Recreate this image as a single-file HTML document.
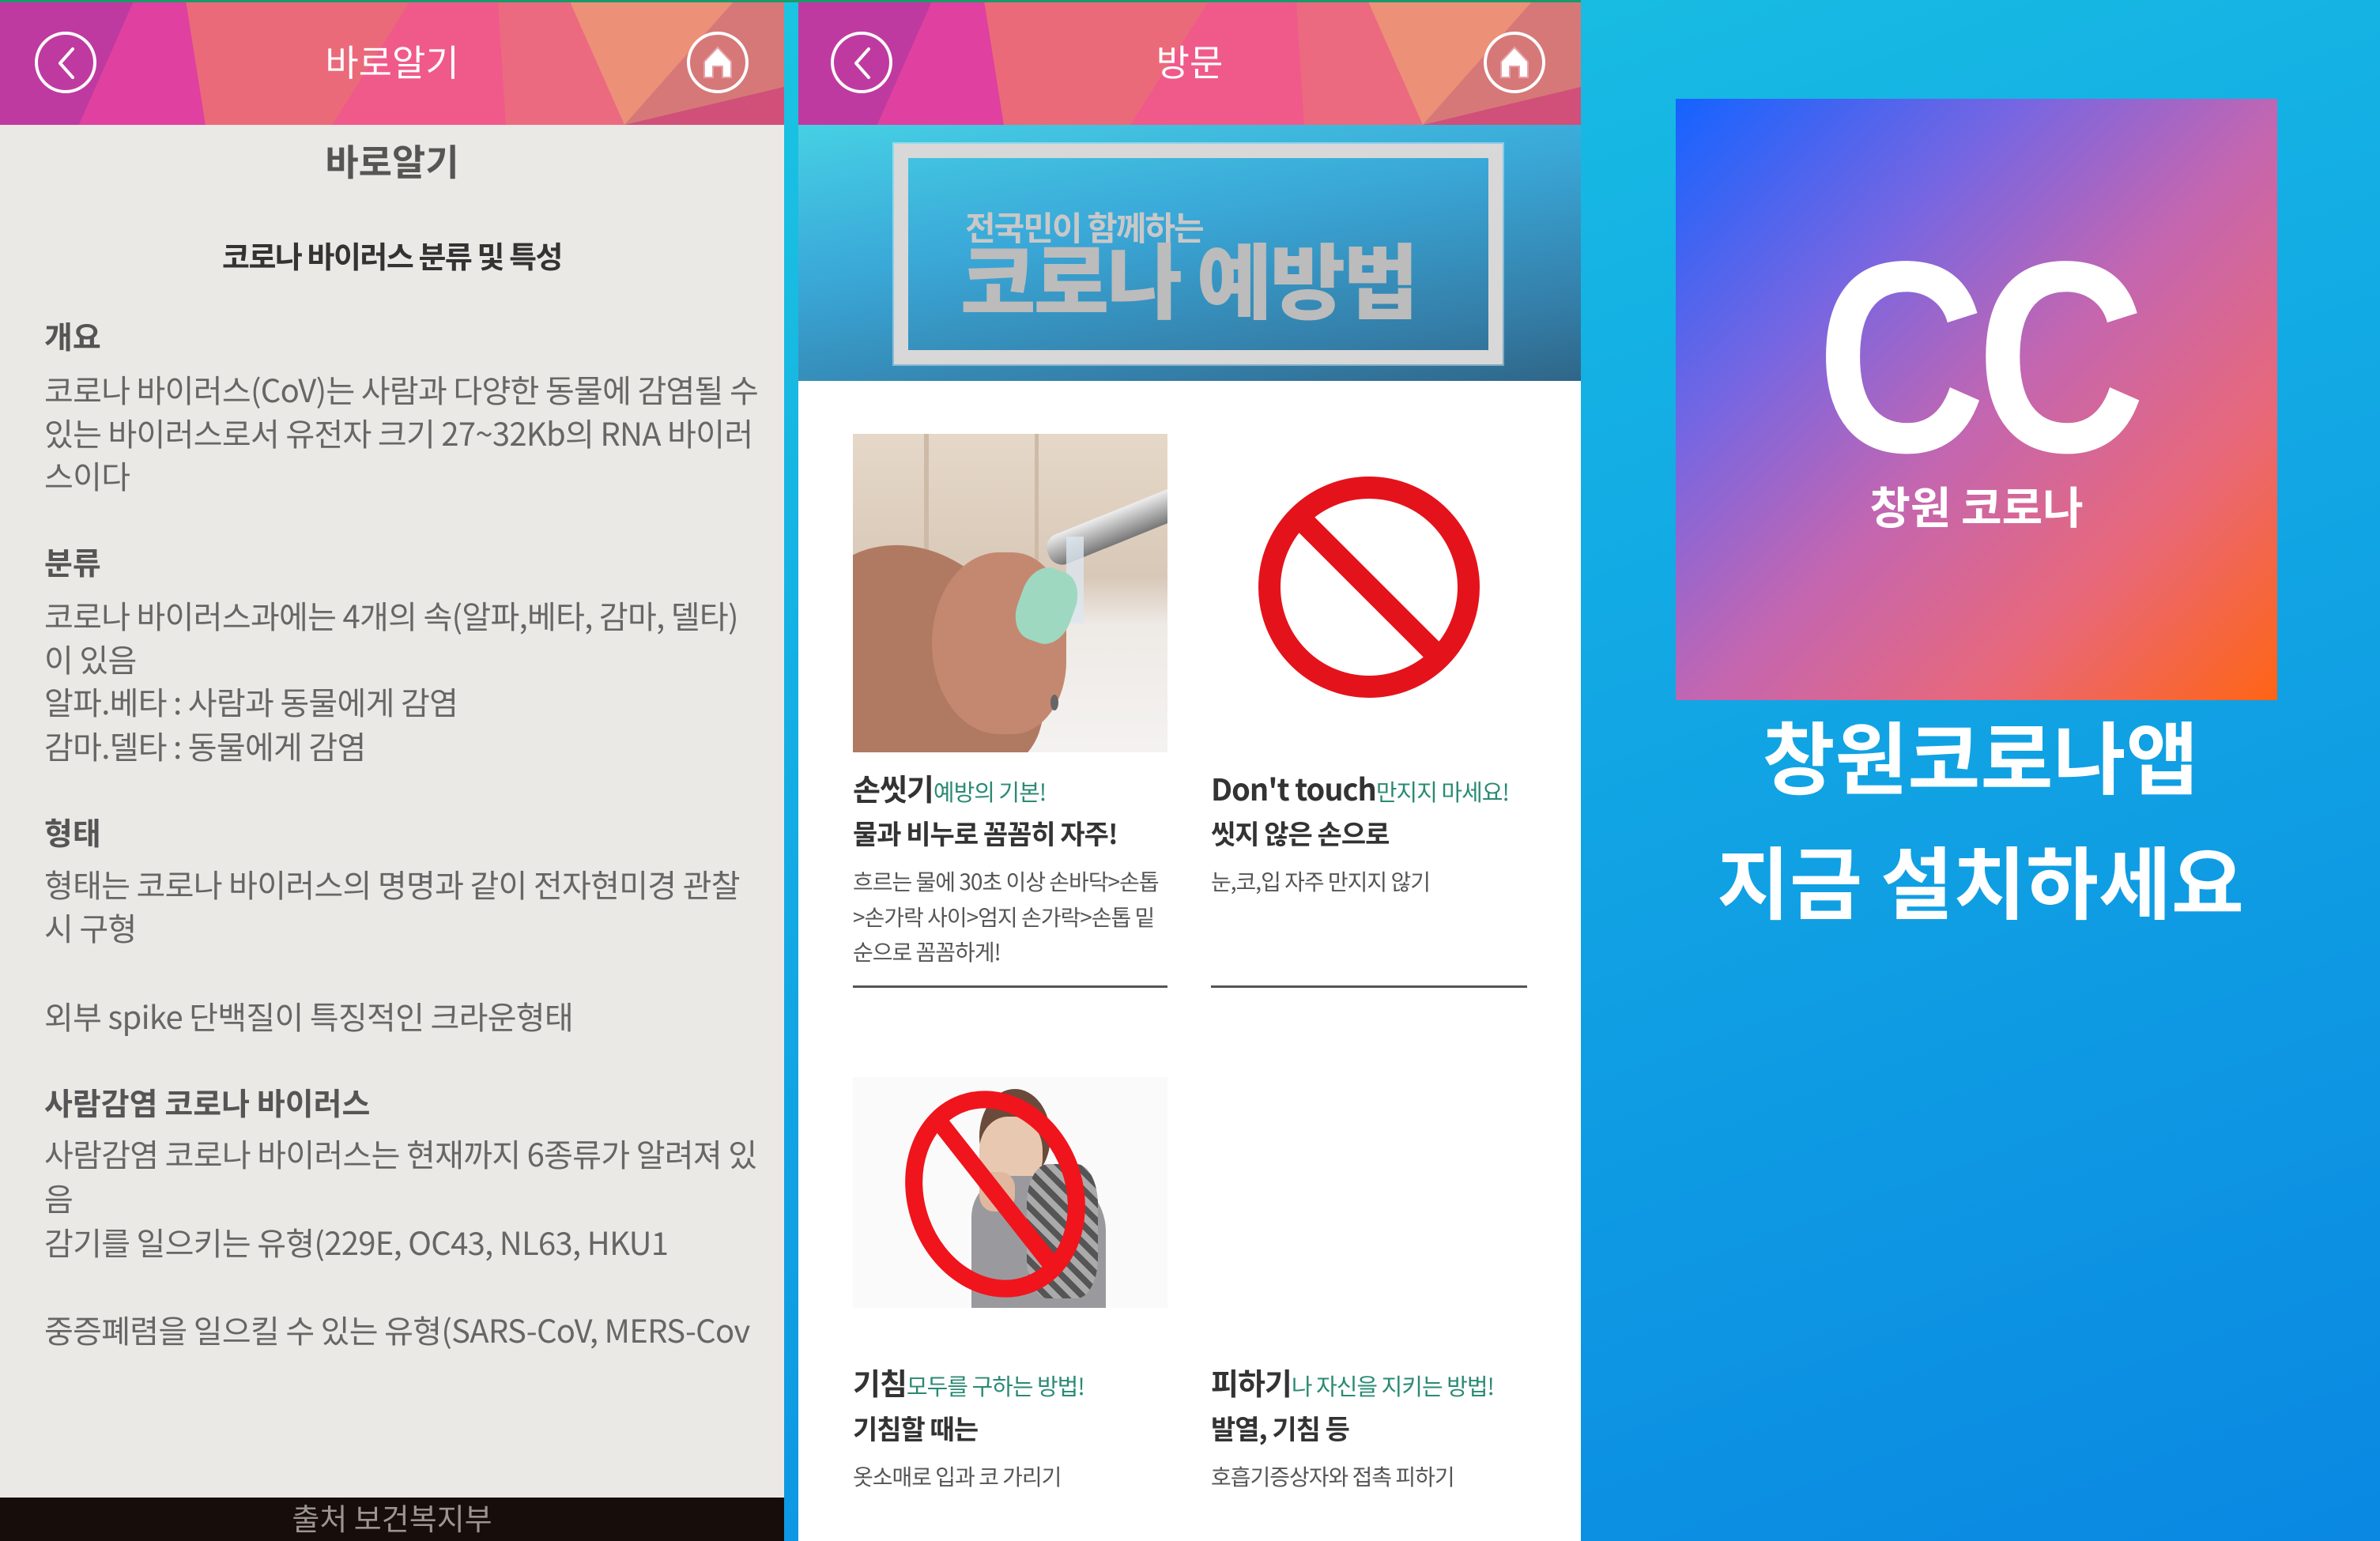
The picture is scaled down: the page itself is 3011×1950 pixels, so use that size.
<!DOCTYPE html>
<html><head><meta charset="utf-8">
<style>
*{margin:0;padding:0;box-sizing:border-box}
body{width:3011px;height:1950px;overflow:hidden;position:relative;background:linear-gradient(160deg,#1ecde0 0%,#14b0e4 40%,#0a88e2 100%);font-family:"Liberation Sans","Noto Sans CJK KR",sans-serif}
.t{position:absolute;white-space:nowrap;line-height:1}
.k{font-family:"Noto Sans CJK KR","Liberation Sans",sans-serif}
.p{position:absolute;overflow:hidden}
.lt{left:56px;font-size:40px;color:#666;letter-spacing:-0.7px}
.lh{left:56px;font-size:39px;color:#555;font-weight:bold}
.c1{left:69px}.c2{left:522px}
.h1{font-size:38px;font-weight:bold;color:#333;letter-spacing:-1px}
.h1 span{font-size:29px;color:#2a8a72;font-weight:normal}
.h2{font-size:34px;font-weight:bold;color:#333;letter-spacing:-1px}
.b{font-size:28px;color:#555;letter-spacing:-1px}
</style></head><body>
<div style="position:absolute;left:0;top:0;width:2000px;height:3px;background:#1a9a6a;z-index:5"></div>

<!-- LEFT PANEL -->
<div class="p" style="left:0;top:0;width:992px;height:1950px;background:#ebe9e5">
<svg width="992" height="158" style="position:absolute;left:0;top:0">
<rect width="992" height="158" fill="#ea6a80"/>
<polygon points="0,0 170,0 100,158 0,158" fill="#bf3aa0"/>
<polygon points="170,0 235,0 260,158 100,158" fill="#e040a0"/>
<polygon points="235,0 520,0 420,158 260,158" fill="#ea6a7a"/>
<polygon points="520,0 630,0 640,158 420,158" fill="#f05a8a"/>
<polygon points="630,0 720,0 790,158 640,158" fill="#eb6a80"/>
<polygon points="720,0 930,0 790,158" fill="#ec9078"/>
<polygon points="930,0 992,0 992,158 790,158" fill="#d67878"/>
<polygon points="790,158 992,110 992,158" fill="#d0507a"/>
<circle cx="83" cy="79" r="37" fill="none" stroke="#fff" stroke-width="4"/>
<path d="M92 62 L76 80 L92 98" fill="none" stroke="#fff" stroke-width="4" stroke-linecap="round" stroke-linejoin="round"/>
<circle cx="908" cy="79" r="37" fill="none" stroke="#fff" stroke-width="4"/>
<path d="M891 98 L891 78 L908 60 L925 78 L925 98 L914 98 L914 84 L902 84 L902 98 Z" fill="#fff" stroke="#e8a0a8" stroke-width="2"/>
</svg>
<div class="t k" style="left:0;width:992px;text-align:center;top:54px;font-size:46px;color:#fff">바로알기</div>
<div class="t k" style="left:0;width:992px;text-align:center;top:180px;font-size:46px;color:#555;font-weight:bold">바로알기</div>
<div class="t k" style="left:0;width:992px;text-align:center;top:304px;font-size:38px;color:#333;font-weight:bold;letter-spacing:-1.5px">코로나 바이러스 분류 및 특성</div>
<div class="t k lh" style="top:406px">개요</div>
<div class="t k lt" style="top:472px">코로나 바이러스(CoV)는 사람과 다양한 동물에 감염될 수</div>
<div class="t k lt" style="top:527px">있는 바이러스로서 유전자 크기 27~32Kb의 RNA 바이러</div>
<div class="t k lt" style="top:581px">스이다</div>
<div class="t k lh" style="top:692px">분류</div>
<div class="t k lt" style="top:758px">코로나 바이러스과에는 4개의 속(알파,베타, 감마, 델타)</div>
<div class="t k lt" style="top:813px">이 있음</div>
<div class="t k lt" style="top:867px">알파.베타 : 사람과 동물에게 감염</div>
<div class="t k lt" style="top:923px">감마.델타 : 동물에게 감염</div>
<div class="t k lh" style="top:1034px">형태</div>
<div class="t k lt" style="top:1098px">형태는 코로나 바이러스의 명명과 같이 전자현미경 관찰</div>
<div class="t k lt" style="top:1153px">시 구형</div>
<div class="t k lt" style="top:1265px">외부 spike 단백질이 특징적인 크라운형태</div>
<div class="t k lh" style="top:1376px">사람감염 코로나 바이러스</div>
<div class="t k lt" style="top:1439px">사람감염 코로나 바이러스는 현재까지 6종류가 알려져 있</div>
<div class="t k lt" style="top:1495px">음</div>
<div class="t k lt" style="top:1551px">감기를 일으키는 유형(229E, OC43, NL63, HKU1</div>
<div class="t k lt" style="top:1662px">중증폐렴을 일으킬 수 있는 유형(SARS-CoV, MERS-Cov</div>
<div style="position:absolute;left:0;top:1895px;width:992px;height:55px;background:#170d0a"></div>
<div class="t k" style="left:0;width:992px;text-align:center;top:1901px;font-size:38px;color:#9a9590">출처 보건복지부</div>
</div>

<!-- MIDDLE PANEL -->
<div class="p" style="left:1010px;top:0;width:990px;height:1950px;background:#fff">
<svg width="990" height="158" style="position:absolute;left:0;top:0">
<rect width="990" height="158" fill="#ea6a80"/>
<polygon points="0,0 170,0 100,158 0,158" fill="#bf3aa0"/>
<polygon points="170,0 235,0 260,158 100,158" fill="#e040a0"/>
<polygon points="235,0 520,0 420,158 260,158" fill="#ea6a7a"/>
<polygon points="520,0 630,0 640,158 420,158" fill="#f05a8a"/>
<polygon points="630,0 720,0 790,158 640,158" fill="#eb6a80"/>
<polygon points="720,0 930,0 790,158" fill="#ec9078"/>
<polygon points="930,0 990,0 990,158 790,158" fill="#d67878"/>
<polygon points="790,158 990,110 990,158" fill="#d0507a"/>
<circle cx="80" cy="79" r="37" fill="none" stroke="#fff" stroke-width="4"/>
<path d="M89 62 L73 80 L89 98" fill="none" stroke="#fff" stroke-width="4" stroke-linecap="round" stroke-linejoin="round"/>
<circle cx="906" cy="79" r="37" fill="none" stroke="#fff" stroke-width="4"/>
<path d="M889 98 L889 78 L906 60 L923 78 L923 98 L912 98 L912 84 L900 84 L900 98 Z" fill="#fff" stroke="#e8a0a8" stroke-width="2"/>
</svg>
<div class="t k" style="left:0;width:990px;text-align:center;top:54px;font-size:46px;color:#fff">방문</div>
<div style="position:absolute;left:0;top:158px;width:990px;height:324px;background:linear-gradient(170deg,#46d0e4 0%,#3aa8d8 40%,#347ea8 80%,#2f6688 100%)"></div>
<div style="position:absolute;left:121px;top:182px;width:770px;height:279px;border:18px solid #d8d8d8;outline:2px solid rgba(255,255,255,.4)"></div>
<div class="t k" style="left:211px;top:266px;font-size:42px;color:#c8c8c8;font-weight:bold;letter-spacing:-2px">전국민이 함께하는</div>
<div class="t k" style="left:205px;top:298px;font-size:104px;color:#bcbcbc;font-weight:900;letter-spacing:-3px">코로나 예방법</div>

<!-- hand photo -->
<div style="position:absolute;left:69px;top:549px;width:398px;height:403px;overflow:hidden;background:linear-gradient(180deg,#e6d8c8 0%,#d8c8b8 45%,#eeeae6 60%,#f4f2f0 100%)">
<div style="position:absolute;left:90px;top:0;width:6px;height:180px;background:#cdbba8"></div>
<div style="position:absolute;left:230px;top:0;width:5px;height:190px;background:#cdbba8"></div>
<div style="position:absolute;left:240px;top:95px;width:200px;height:40px;background:linear-gradient(180deg,#eee,#777);transform:rotate(-22deg);border-radius:18px"></div>
<div style="position:absolute;left:270px;top:130px;width:22px;height:110px;background:rgba(220,230,240,.8)"></div>
<div style="position:absolute;left:-40px;top:130px;width:260px;height:320px;background:#b07a62;border-radius:40% 60% 30% 30%;transform:rotate(-20deg)"></div>
<div style="position:absolute;left:100px;top:150px;width:170px;height:230px;background:#c48870;border-radius:50% 40% 40% 50%"></div>
<div style="position:absolute;left:210px;top:170px;width:70px;height:95px;background:#9ed8c0;border-radius:40%;transform:rotate(20deg)"></div>
<div style="position:absolute;left:250px;top:330px;width:10px;height:20px;background:#666;border-radius:50%"></div>
</div>
<svg style="position:absolute;left:522px;top:549px" width="400" height="403">
<circle cx="200" cy="194" r="126" fill="none" stroke="#e4131b" stroke-width="28"/>
<line x1="116" y1="110" x2="284" y2="278" stroke="#e4131b" stroke-width="28"/>
</svg>
<div class="t k h1 c1" style="top:978px">손씻기<span>예방의 기본!</span></div>
<div class="t k h2 c1" style="top:1037px">물과 비누로 꼼꼼히 자주!</div>
<div class="t k b c1" style="top:1101px">흐르는 물에 30초 이상 손바닥&gt;손톱</div>
<div class="t k b c1" style="top:1146px">&gt;손가락 사이&gt;엄지 손가락&gt;손톱 밑</div>
<div class="t k b c1" style="top:1190px">순으로 꼼꼼하게!</div>
<div style="position:absolute;left:69px;top:1247px;width:398px;height:3px;background:#555"></div>
<div class="t k h1 c2" style="top:978px">Don't touch<span>만지지 마세요!</span></div>
<div class="t k h2 c2" style="top:1037px">씻지 않은 손으로</div>
<div class="t k b c2" style="top:1101px">눈,코,입 자주 만지지 않기</div>
<div style="position:absolute;left:522px;top:1247px;width:400px;height:3px;background:#555"></div>

<!-- cough image -->
<div style="position:absolute;left:69px;top:1363px;width:398px;height:292px;overflow:hidden;background:#fafafa">
<div style="position:absolute;left:160px;top:15px;width:90px;height:120px;background:#6a4a3a;border-radius:50%"></div>
<div style="position:absolute;left:160px;top:50px;width:80px;height:95px;background:#e8c8b0;border-radius:45%"></div>
<div style="position:absolute;left:150px;top:125px;width:170px;height:175px;background:#9a9a9e;border-radius:30% 40% 0 0"></div>
<div style="position:absolute;left:220px;top:110px;width:90px;height:170px;background:repeating-linear-gradient(45deg,#555 0 8px,#aaa 8px 16px);border-radius:30%"></div>
<div style="position:absolute;left:160px;top:120px;width:45px;height:50px;background:#e0b8a0;border-radius:40%"></div>
</div>
<svg style="position:absolute;left:69px;top:1363px" width="398" height="292">
<ellipse cx="180" cy="148" rx="100" ry="122" fill="none" stroke="#f0141c" stroke-width="22" transform="rotate(-20 180 148)"/>
<line x1="112" y1="60" x2="252" y2="238" stroke="#f0141c" stroke-width="22"/>
</svg>
<div class="t k h1 c1" style="top:1730px">기침<span>모두를 구하는 방법!</span></div>
<div class="t k h2 c1" style="top:1790px">기침할 때는</div>
<div class="t k b c1" style="top:1854px">옷소매로 입과 코 가리기</div>
<div class="t k h1 c2" style="top:1730px">피하기<span>나 자신을 지키는 방법!</span></div>
<div class="t k h2 c2" style="top:1790px">발열, 기침 등</div>
<div class="t k b c2" style="top:1854px">호흡기증상자와 접촉 피하기</div>
</div>

<!-- RIGHT -->
<div style="position:absolute;left:2120px;top:125px;width:761px;height:761px;background:linear-gradient(135deg,#1463ff 0%,#7a66e0 30%,#c466b0 52%,#e8687a 75%,#ff6414 100%)"></div>
<div class="t" style="left:2120px;width:761px;text-align:center;top:280px;font-size:345px;font-weight:bold;color:#fff;letter-spacing:-14px"><span style="display:inline-block;transform:scaleX(0.86)">CC</span></div>
<div class="t k" style="left:2120px;width:761px;text-align:center;top:612px;font-size:56px;font-weight:bold;color:#fff">창원 코로나</div>
<div class="t k" style="left:2000px;width:1011px;text-align:center;top:904px;font-size:100px;font-weight:bold;color:#fff">창원코로나앱</div>
<div class="t k" style="left:2000px;width:1011px;text-align:center;top:1062px;font-size:100px;font-weight:bold;color:#fff">지금 설치하세요</div>
</body></html>
